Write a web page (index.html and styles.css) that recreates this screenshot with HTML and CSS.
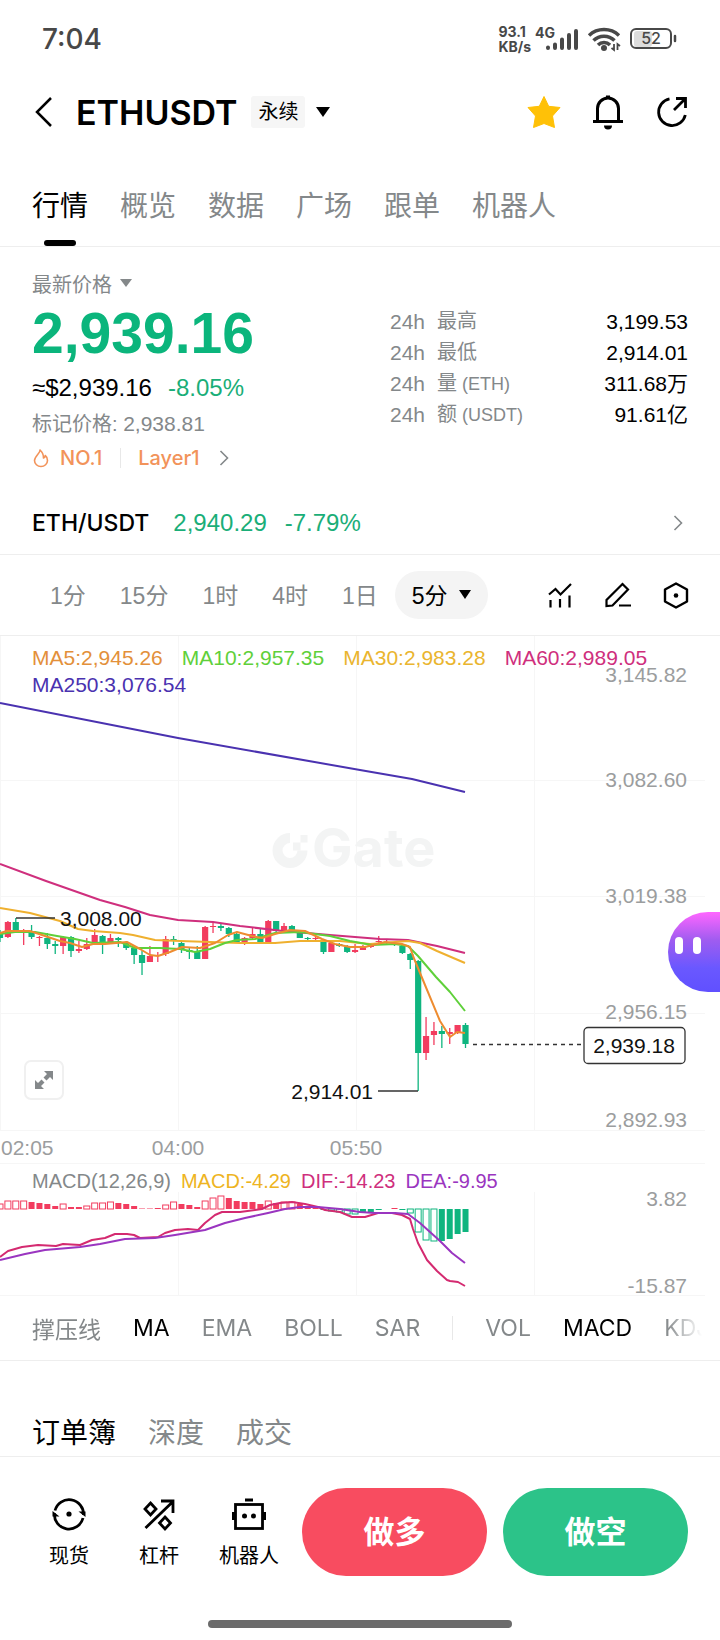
FILE: index.html
```html
<!DOCTYPE html>
<html lang="zh-CN">
<head>
    <meta charset="UTF-8">
    <meta name="viewport" content="width=device-width, initial-scale=1.0">
    <title>ETHUSDT 永续</title>
    <link rel="stylesheet" href="styles.css">
</head>
<body>
    <div class="status-bar">
        <span class="clock">7:04</span>
        <div class="status-icons">
            <span class="net-speed">93.1<br>KB/s</span>
            <svg width="44" height="28" viewBox="0 0 44 28">
                <text class="net-type" x="0" y="13">4G</text>
                <g stroke="#484848" stroke-width="4" stroke-linecap="round">
                    <path d="M13 22.5v.5M20 19.5V23M27 14.500V23M34 10V23M41 6V23"/>
                </g>
            </svg>
            <svg width="34" height="28" viewBox="0 0 34 28">
                <g fill="none" stroke="#484848" stroke-width="3.500">
                    <path d="M2 10.500a22 22 0 0 1 30 0M6.500 15.500a15 15 0 0 1 21 0M11 20a8.500 8.500 0 0 1 12 0"/>
                </g>
                <circle cx="17" cy="23" r="3" fill="#484848"/>
                <path d="M24 17h10v10H24z" fill="#fff"/>
                <path d="M27 19v6l-2.500-2M30.500 25v-6l2.500 2" fill="none" stroke="#484848" stroke-width="1.800"/>
            </svg>
            <svg width="48" height="28" viewBox="0 0 48 28">
                <rect x="5" y="6" width="18" height="16" rx="3" fill="#dcdcdc"/>
                <rect x="2" y="4" width="40" height="19" rx="5" fill="none" stroke="#484848" stroke-width="2"/>
                <path d="M46 11v5" stroke="#484848" stroke-width="2.500" stroke-linecap="round"/>
                <text class="battery-level" x="22" y="19" text-anchor="middle">52</text>
            </svg>
        </div>
    </div>

    <header class="header">
        <button type="button" class="icon-btn back" aria-label="返回">
            <svg width="20" height="32" viewBox="0 0 20 32"><path d="M17 2 3 16l14 14" fill="none" stroke="#000" stroke-width="2.500"/></svg>
        </button>
        <h1>ETHUSDT</h1>
        <button type="button" class="contract">
            <span class="tag">永续</span>
            <svg width="14" height="10" viewBox="0 0 14 10"><path d="M0 0h14L7 10z"/></svg>
        </button>
        <div class="header-actions">
            <button type="button" class="icon-btn" aria-label="收藏">
                <svg width="36" height="36" viewBox="0 0 36 36"><path d="M18 2.500l4.700 9.800 11.300 1.200-7.500 8.500 2 11.500-10.500-4-10.500 4 2-11.500L2 13.500l11.300-1.200z" fill="#ffc107" stroke="#ffc107" stroke-linejoin="round"/></svg>
            </button>
            <button type="button" class="icon-btn" aria-label="提醒">
                <svg width="36" height="36" viewBox="0 0 36 36">
                    <path d="M7.500 27V14.500a10.500 10.500 0 0 1 21 0V27M3 27.500h30" fill="none" stroke="#000" stroke-width="3"/>
                    <path d="M16 1.500h4V5h-4zM14 31.500h8a4 4 0 0 1-8 0z"/>
                </svg>
            </button>
            <button type="button" class="icon-btn" aria-label="分享">
                <svg width="36" height="36" viewBox="0 0 36 36">
                    <path d="M15.500 4.800A13.500 13.500 0 1 0 31.300 21" fill="none" stroke="#000" stroke-width="2.800"/>
                    <path d="M20 16 31 5M22 4.500h9.500V14" fill="none" stroke="#000" stroke-width="2.800"/>
                </svg>
            </button>
        </div>
    </header>

    <nav class="tabs main-tabs">
        <button type="button" class="active">行情</button>
        <button type="button">概览</button>
        <button type="button">数据</button>
        <button type="button">广场</button>
        <button type="button">跟单</button>
        <button type="button">机器人</button>
    </nav>

    <section class="summary">
        <div class="price-col">
            <button type="button" class="price-type">最新价格
                <svg width="12" height="8" viewBox="0 0 12 8"><path d="M0 0h12L6 8z" fill="#84888a"/></svg>
            </button>
            <div class="last-price">2,939.16</div>
            <div class="fiat"><span>≈$2,939.16</span><span class="up">-8.05%</span></div>
            <div class="mark">标记价格: <span class="num">2,938.81</span></div>
            <a class="rank" href="#">
                <svg width="18" height="20" viewBox="0 0 16 20"><path d="M7 2c.5 3-5.500 6-5.500 10.500a6.500 6 0 0 0 13 0c0-2-1-4-2.300-5-.2 1.500-.8 2.300-1.700 2.500C10.500 7 9.500 4 7 2z" fill="none" stroke="#f2935a" stroke-width="1.600" stroke-linejoin="round"/></svg>
                <span>NO.1</span>
                <i class="sep"></i>
                <span>Layer1</span>
                <svg class="chevron" width="10" height="16" viewBox="0 0 10 16"><path d="M1.500 1l7 7-7 7" fill="none" stroke="#84888a" stroke-width="1.600"/></svg>
            </a>
        </div>
        <dl class="stats">
            <div><dt><span class="num">24h</span><span>最高</span></dt><dd>3,199.53</dd></div>
            <div><dt><span class="num">24h</span><span>最低</span></dt><dd>2,914.01</dd></div>
            <div><dt><span class="num">24h</span><span>量<small>(ETH)</small></span></dt><dd>311.68万</dd></div>
            <div><dt><span class="num">24h</span><span>额<small>(USDT)</small></span></dt><dd>91.61亿</dd></div>
        </dl>
    </section>

    <a class="spot-pair" href="#">
        <span class="pair">ETH/USDT</span>
        <span>2,940.29</span>
        <span class="change">-7.79%</span>
        <svg class="chevron" width="10" height="16" viewBox="0 0 10 16"><path d="M1.500 1l7 7-7 7" fill="none" stroke="#84888a" stroke-width="1.600"/></svg>
    </a>

    <div class="intervals">
        <button type="button">1分</button>
        <button type="button">15分</button>
        <button type="button">1时</button>
        <button type="button">4时</button>
        <button type="button">1日</button>
        <button type="button" class="current">5分 <svg width="12" height="9" viewBox="0 0 12 9"><path d="M0 0h12L6 9z"/></svg></button>
        <div class="chart-tools">
            <button type="button" class="icon-btn" aria-label="指标">
                <svg width="28" height="28" viewBox="0 0 28 28" fill="none" stroke="#000" stroke-width="2.200">
                    <path d="M3 13.500 9.500 8l5 5.500L25 3M4.500 19v7.500M14 18v8.500M23.500 14.500v12"/>
                </svg>
            </button>
            <button type="button" class="icon-btn" aria-label="画线">
                <svg width="28" height="28" viewBox="0 0 28 28" fill="none" stroke="#000" stroke-width="2.200">
                    <path d="M2.500 25v-6L18.500 3l5.500 5.500L8.500 24.500zM15 24.500h12"/>
                </svg>
            </button>
            <button type="button" class="icon-btn" aria-label="设置">
                <svg width="28" height="28" viewBox="0 0 28 28">
                    <path d="M14 2.500l11 6v12l-11 6-11-6v-12z" fill="none" stroke="#000" stroke-width="2.400" stroke-linejoin="round"/>
                    <circle cx="14" cy="14.500" r="2.300"/>
                </svg>
            </button>
        </div>
    </div>

    <section class="chart">
        <div class="legend ma-legend">
            <span class="ma5">MA5:2,945.26</span>
            <span class="ma10">MA10:2,957.35</span>
            <span class="ma30">MA30:2,983.28</span>
            <span class="ma60">MA60:2,989.05</span>
            <span class="ma250">MA250:3,076.54</span>
        </div>
        <svg class="plot" viewBox="0 0 720 528">
            <g class="grid">
                <path d="M0 144.500h705M0 260.500h705M0 377.500h705M0 494.500h705M0 527.500h705"/>
                <path d="M.5 0v494M178.500 0v494M356.500 0v494M534.500 0v494"/>
            </g>
            <g class="watermark">
                <path d="M290 197a17.500 17.500 0 1 0 17.500 17.500h-10a7.500 7.500 0 1 1-7.500-7.500z"/>
                <path d="M293 206.500h7.500v8H293zM300.500 199h7v7.500h-7z"/>
                <text x="312" y="231">Gate</text>
            </g>
            <g id="candles"></g>
            <g id="maLines" class="lines"></g>
            <path d="M16 282h39M378 455h40" stroke="#333" stroke-width="1.500"/>
            <text class="mark-text" x="60" y="290">3,008.00</text>
            <text class="mark-text" x="373" y="463" text-anchor="end">2,914.01</text>
            <g class="axis" text-anchor="end">
                <text x="687" y="46">3,145.82</text>
                <text x="687" y="151">3,082.60</text>
                <text x="687" y="267">3,019.38</text>
                <text x="687" y="383">2,956.15</text>
                <text x="687" y="491">2,892.93</text>
            </g>
            <g class="axis">
                <text x="1" y="519">02:05</text>
                <text x="178" y="519" text-anchor="middle">04:00</text>
                <text x="356" y="519" text-anchor="middle">05:50</text>
            </g>
            <path d="M473 408.500h110" stroke="#333" stroke-width="1.500" stroke-dasharray="4 4"/>
            <rect x="584" y="391.500" width="101" height="36" rx="4" fill="#fff" stroke="#333" stroke-width="1.300"/>
            <text class="mark-text" x="634" y="417" text-anchor="middle">2,939.18</text>
        </svg>
        <button type="button" class="expand" aria-label="全屏">
            <svg width="20" height="20" viewBox="0 0 20 20" fill="#84888a">
                <path d="M10 1h9v9l-3-3-3.500 3.500-3-3L13 4zM10 19H1v-9l3 3 3.500-3.500 3 3L7 16z"/>
            </svg>
        </button>
        <button type="button" class="assistant" aria-label="助手"><i></i><i></i></button>
    </section>

    <section class="chart">
        <div class="legend macd-legend">
            <span>MACD(12,26,9)</span>
            <span class="macd">MACD:-4.29</span>
            <span class="dif">DIF:-14.23</span>
            <span class="dea">DEA:-9.95</span>
        </div>
        <svg class="plot" viewBox="0 0 720 132">
            <g class="grid">
                <path d="M0 131.500h705"/>
                <path d="M178.500 28v103M356.500 28v103M534.500 28v103"/>
            </g>
            <g id="macdBars"></g>
            <g id="macdLines" class="lines"></g>
            <g class="axis" text-anchor="end">
                <text x="687" y="42">3.82</text>
                <text x="687" y="129">-15.87</text>
            </g>
        </svg>
    </section>

    <div class="indicators">
        <button type="button">撑压线</button>
        <button type="button" class="active">MA</button>
        <button type="button">EMA</button>
        <button type="button">BOLL</button>
        <button type="button">SAR</button>
        <i class="sep"></i>
        <button type="button">VOL</button>
        <button type="button" class="active">MACD</button>
        <button type="button">KDJ</button>
    </div>

    <nav class="tabs book-tabs">
        <button type="button" class="active">订单簿</button>
        <button type="button">深度</button>
        <button type="button">成交</button>
    </nav>

    <footer class="bottom">
        <div class="bottom-row">
            <a class="shortcut" href="#">
                <svg width="36" height="36" viewBox="0 0 36 36">
                    <path d="M4 14.500A14.500 14.500 0 0 1 32.500 19M32 22A14.500 14.500 0 0 1 3.500 17" fill="none" stroke="#000" stroke-width="2.800"/>
                    <path d="M27.500 15.500h7V21zM8.500 20.500h-7V15z"/>
                    <circle cx="18" cy="18" r="2.600"/>
                </svg>
                <span>现货</span>
            </a>
            <a class="shortcut" href="#">
                <svg width="36" height="36" viewBox="0 0 36 36" fill="none" stroke="#000" stroke-width="2.800">
                    <path d="M4.500 32 32 5.500M20 5h12v12M9.500 7l5.500 6-5.500 6L4 13zM24 21l5.500 6-5.500 6-5.500-6z"/>
                </svg>
                <span>杠杆</span>
            </a>
            <a class="shortcut" href="#">
                <svg width="36" height="36" viewBox="0 0 36 36">
                    <rect x="4.500" y="8.500" width="27" height="24" fill="none" stroke="#000" stroke-width="2.800"/>
                    <path d="M14 2.500h8v3h-8zM1 16h3v8H1zM32 16h3v8h-3z"/>
                    <circle cx="13.500" cy="20" r="2.500"/><circle cx="22.500" cy="20" r="2.500"/>
                </svg>
                <span>机器人</span>
            </a>
            <div class="trade">
                <button type="button" class="long">做多</button>
                <button type="button" class="short">做空</button>
            </div>
        </div>
        <div class="home-bar"></div>
    </footer>

    <script src="script.js"></script>
</body>
</html>
```

FILE: styles.css
```css
body {
    margin: 0;
    background-color: #fff;
    color: #000;
    font-family: "Liberation Sans", "Noto Sans CJK SC", sans-serif;
    font-size: 20px;
    overflow-x: hidden;
}

button {
    margin: 0;
    padding: 0;
    border: none;
    background: none;
    color: inherit;
    font: inherit;
    white-space: nowrap;
    cursor: pointer;
}

a {
    color: inherit;
    text-decoration: none;
}

svg {
    display: block;
    flex-shrink: 0;
}

.icon-btn {
    display: flex;
}

/* status bar */
.status-bar {
    display: flex;
    align-items: center;
    justify-content: space-between;
    height: 78px;
    padding: 0 43px 0 42px;
    color: #484848;
    font-family: Inter, sans-serif;
}

.clock {
    font-size: 28px;
    font-weight: 500;
}

.status-icons {
    display: flex;
    align-items: center;
    gap: 8px;
}

.net-speed {
    font-size: 14px;
    font-weight: 700;
    line-height: 15px;
    margin-right: -4px;
}

.net-type {
    font-size: 14px;
    font-weight: 700;
    fill: #484848;
}

.battery-level {
    font-size: 16px;
    font-weight: 500;
    fill: #484848;
}

/* header */
.header {
    display: flex;
    align-items: center;
    height: 68px;
    padding: 0 30px 0 34px;
}

.header h1 {
    margin: 0 14px 0 22px;
    font-family: Inter, sans-serif;
    font-size: 34px;
    font-weight: 600;
}

.contract {
    display: flex;
    align-items: center;
    gap: 11px;
}

.tag {
    padding: 0 7px;
    background-color: #f6f6f6;
    border-radius: 3px;
    line-height: 32px;
}

.header-actions {
    display: flex;
    gap: 28px;
    margin-left: auto;
}

/* tabs */
.tabs {
    display: flex;
    gap: 32px;
    padding: 20px 32px 0;
    border-bottom: 1px solid #eee;
    font-size: 28px;
    color: #84888a;
}

.tabs button {
    position: relative;
    height: 80px;
    padding-bottom: 4px;
}

.tabs .active {
    color: #000;
}

.main-tabs .active::after {
    content: "";
    position: absolute;
    left: 50%;
    bottom: 0;
    width: 32px;
    height: 6px;
    margin-left: -16px;
    border-radius: 3px;
    background-color: #000;
}

/* price summary */
.summary {
    display: grid;
    grid-template-columns: 358fr 298fr;
    padding: 22px 32px 18px;
    color: #84888a;
}

.price-type {
    display: flex;
    align-items: center;
    gap: 8px;
    height: 28px;
}

.last-price {
    color: #0bb57c;
    font-size: 57px;
    font-weight: bold;
    line-height: 73px;
}

.fiat {
    display: flex;
    gap: 16px;
    color: #000;
    font-size: 24px;
    line-height: 36px;
}

.fiat .up {
    color: #1aae78;
}

.mark {
    line-height: 36px;
}

.num {
    font-size: 21px;
}

.rank {
    display: flex;
    align-items: center;
    height: 32px;
    color: #f2935a;
    font-family: Inter, sans-serif;
    font-weight: 500;
}

.rank span {
    margin-left: 10px;
}

.rank .sep {
    height: 20px;
    margin: 0 7px 0 18px;
}

.rank .chevron {
    margin-left: 20px;
}

.sep {
    width: 1px;
    background-color: #e8e8e8;
}

.stats {
    margin: 37px 0 0;
}

.stats div {
    display: flex;
    justify-content: space-between;
    height: 31px;
    line-height: 31px;
}

.stats dt {
    display: flex;
    gap: 12px;
}

.stats small {
    margin-left: 5px;
    font-size: 18px;
}

.stats dd {
    margin: 0;
    color: #000;
    font-size: 21px;
}

.spot-pair {
    display: flex;
    align-items: center;
    height: 62px;
    padding: 0 37px 0 32px;
    border-bottom: 1px solid #eee;
    color: #1aae78;
    font-size: 24px;
}

.spot-pair .pair {
    margin-right: 24px;
    color: #000;
    font-family: Inter, sans-serif;
    font-size: 23px;
    font-weight: 500;
}

.spot-pair .change {
    margin-left: 18px;
}

.spot-pair .chevron {
    margin-left: auto;
}

/* interval bar */
.intervals {
    display: flex;
    align-items: center;
    height: 80px;
    padding: 0 30px 0 33px;
    border-bottom: 1px solid #eee;
    color: #84888a;
    font-size: 23px;
}

.intervals > button {
    padding: 0 17px 2px;
}

.intervals .current {
    display: flex;
    align-items: center;
    gap: 11px;
    height: 48px;
    border-radius: 24px;
    background-color: #f4f4f4;
    color: #000;
}

.chart-tools {
    display: flex;
    gap: 30px;
    margin-left: auto;
}

/* charts */
.chart {
    position: relative;
}

.plot {
    width: 100%;
    height: auto;
}

.legend {
    position: absolute;
    top: 0;
    left: 0;
    right: 0;
    display: flex;
    flex-wrap: wrap;
    white-space: nowrap;
}

.ma-legend {
    gap: 0 19px;
    padding: 8px 32px 0;
    font-size: 21px;
    line-height: 27px;
}

.macd-legend {
    gap: 10px;
    padding: 4px 32px 0;
    color: #84888a;
    font-size: 20px;
    line-height: 27px;
}

.ma5 { color: #e3903a; }
.ma10 { color: #5fd03a; }
.ma30 { color: #eab52f; }
.ma60 { color: #cf2f7d; }
.ma250 { color: #4a32b0; }
.macd { color: #eeb422; }
.dif { color: #cf2f7d; }
.dea { color: #9a35c0; }

.grid path {
    stroke: #f6f6f6;
}

.watermark {
    fill: #f3f4f4;
}

.watermark text {
    font-family: Inter, sans-serif;
    font-size: 54px;
    font-weight: 700;
}

.axis text {
    fill: #9b9d9e;
    font-size: 21px;
}

.mark-text {
    fill: #111;
    font-size: 21px;
}

.lines polyline {
    fill: none;
    stroke-width: 2;
    stroke-linejoin: round;
}

.expand {
    position: absolute;
    left: 24px;
    bottom: 64px;
    display: flex;
    align-items: center;
    justify-content: center;
    width: 40px;
    height: 40px;
    border: 2px solid #f0f0f0;
    border-radius: 7px;
    background-color: #fff;
}

.assistant {
    position: absolute;
    right: 0;
    top: 276px;
    display: flex;
    gap: 10px;
    width: 52px;
    height: 80px;
    padding: 25px 0 0 7px;
    border-radius: 40px 0 0 40px;
    background: linear-gradient(#ff66ff, #a05cf0 35%, #6a58ff 70%, #6050ff);
}

.assistant i {
    width: 8px;
    height: 17px;
    border-radius: 4px;
    background-color: #fff;
}

/* indicator bar */
.indicators {
    display: flex;
    align-items: center;
    gap: 32px;
    height: 64px;
    padding-left: 32px;
    margin-right: 18px;
    overflow: hidden;
    color: #84888a;
    font-family: Inter, "Noto Sans CJK SC", sans-serif;
    font-size: 23px;
    -webkit-mask-image: linear-gradient(to left, transparent, #000 36px);
    mask-image: linear-gradient(to left, transparent, #000 36px);
}

.indicators .active {
    color: #000;
}

.indicators .sep {
    flex-shrink: 0;
    height: 24px;
}

.book-tabs {
    padding-top: 49px;
    border-top: 1px solid #eee;
}

.book-tabs button {
    height: 46px;
}

/* bottom bar */
.bottom {
    padding: 31px 0 12px;
}

.bottom-row {
    display: flex;
    padding: 0 32px 0 24px;
}

.shortcut {
    display: flex;
    flex-direction: column;
    align-items: center;
    gap: 12px;
    width: 90px;
    padding: 8px 0;
    line-height: 24px;
}

.trade {
    display: flex;
    flex: 1;
    gap: 16px;
    margin-left: 8px;
}

.trade button {
    flex: 1;
    height: 88px;
    padding-bottom: 6px;
    border-radius: 44px;
    color: #fff;
    font-size: 31px;
    font-weight: bold;
}

.long {
    background-color: #f84c60;
}

.short {
    background-color: #2cc389;
}

.home-bar {
    width: 304px;
    height: 8px;
    margin: 44px auto 0;
    border-radius: 4px;
    background-color: #6b6b6b;
}
```

FILE: script.js
```js
const STEP = 7.89;
const RED = '#f23c5f';
const GREEN = '#0fb57f';

// direction, high, body top, body bottom, low
const candles = [
    ['g', 294, 298, 302, 306], ['r', 285, 286, 301, 302], ['g', 282, 286, 294, 297], ['r', 293, 295, 296, 309],
    ['g', 289, 296, 301, 303], ['r', 300, 301, 302, 310], ['g', 297, 302, 308, 313], ['g', 305, 308, 310, 318],
    ['r', 300, 301, 310, 318], ['g', 300, 301, 315, 321], ['r', 305, 313, 315, 317], ['r', 302, 308, 313, 314],
    ['r', 293, 299, 307, 308], ['g', 299, 300, 308, 318], ['r', 298, 302, 306, 307], ['g', 301, 302, 304, 311],
    ['g', 305, 307, 312, 314], ['g', 309, 312, 319, 328], ['g', 315, 319, 327, 339], ['r', 310, 320, 326, 326],
    ['r', 316, 319, 320, 326], ['r', 300, 303, 318, 320], ['g', 300, 303, 305, 309], ['g', 305, 307, 314, 317],
    ['g', 312, 314, 316, 323], ['g', 310, 315, 323, 323], ['r', 290, 291, 323, 323], ['r', 287, 290, 291, 297],
    ['g', 288, 290, 292, 295], ['g', 291, 292, 298, 301], ['g', 296, 298, 306, 306], ['r', 301, 302, 306, 309],
    ['r', 292, 298, 302, 303], ['g', 292, 298, 306, 307], ['r', 284, 285, 306, 306], ['g', 285, 285, 295, 297],
    ['r', 287, 290, 295, 296], ['g', 289, 290, 294, 295], ['g', 294, 296, 302, 302], ['g', 301, 302, 303, 304],
    ['r', 300, 302, 303, 304], ['g', 304, 306, 316, 318], ['r', 307, 307, 316, 316], ['g', 307, 308, 310, 311],
    ['g', 309, 311, 316, 317], ['r', 308, 314, 316, 317], ['r', 309, 310, 314, 314], ['r', 307, 309, 311, 312],
    ['r', 300, 305, 306, 308], ['r', 303, 306, 307, 309], ['g', 306, 307, 309, 310], ['g', 308, 310, 317, 318],
    ['g', 317, 318, 324, 333], ['g', 324, 325, 417, 455], ['r', 381, 400, 417, 424], ['r', 386, 395, 399, 409],
    ['g', 390, 395, 398, 412], ['r', 392, 396, 398, 408], ['r', 389, 389, 397, 398], ['g', 387, 389, 408, 412]
];

const maLines = {
    '#4a32b0': '0,67 178,102 360,134 412,143 465,156',
    '#cf2f7d': '0,228 46,245 100,264 125,271 150,279 178,284 213,286 240,290 283,295 330,299 380,303 408,304 437,310 465,317',
    '#efb02f': '0,272 30,277 60,285 78,293 93,295 120,297 133,299 155,304 180,305 210,306 240,307 275,307 300,305 340,305 370,308 395,306 408,305 420,307 437,315 465,327',
    '#5fd03a': '0,298 15,296 35,296 57,300 75,303 93,307 120,306 135,312 160,312 180,313 195,316 210,313 225,307 237,304 255,303 265,300 275,297 300,296 330,300 350,305 372,309 395,308 408,310 418,320 436,341 450,356 465,375',
    '#ee8c30': '0,297 7,295 30,295 45,300 60,305 70,307 82,311 93,308 105,308 127,306 140,313 150,319 158,320 170,316 182,311 200,312 215,307 228,299 237,296 252,300 262,302 275,298 290,294 305,295 322,303 335,308 350,311 365,311 385,306 402,308 410,311 413,320 425,349 440,385 450,401 457,396 465,397'
};

// height above the zero line, 1 = filled
const bars = [
    [5, 0], [8, 0], [8, 0], [8, 0], [7, 1], [6, 1], [5, 1], [3, 1], [5, 0], [2, 1], [2, 1], [3, 0],
    [6, 0], [6, 0], [7, 0], [6, 1], [5, 1], [3, 1], [0.5, 1], [0.5, 1], [1, 1], [4, 0], [7, 0], [5, 1],
    [4, 1], [2, 1], [8, 0], [11, 0], [13, 0], [11, 1], [8, 1], [7, 1], [7, 1], [5, 1], [8, 0], [6, 1],
    [7, 0], [7, 0], [5, 1], [3, 1], [1, 1], [-1, 1], [-2, 0], [-3, 0], [-5, 0], [-5, 0], [-4, 1], [-3, 1],
    [-1, 1], [0, 1], [1, 1], [-1, 1], [-4, 0], [-23, 0], [-31, 0], [-32, 0], [-32, 1], [-30, 1], [-25, 1], [-23, 1]
];

const macdLines = {
    '#d42a70': '0,93 8,87 22,83 38,81 56,82 63,80 80,81 92,76 105,74 115,70 127,70 134,71 140,74 158,73 165,69 175,66 188,65 198,66 205,59 215,51 222,48 240,48 255,46 262,45 270,41 280,39 292,38 305,40 318,43 325,46 340,48 352,53 365,53 378,49 392,49 402,51 410,55 413,65 418,79 427,96 437,107 447,116 450,117 458,118 465,122',
    '#9a35c0': '0,96 25,90 45,86 80,83 100,80 125,75 155,74 175,71 205,66 225,59 245,54 268,49 285,45 300,43 318,43 340,45 360,48 375,49 395,49 408,50 420,59 440,77 452,89 465,99'
};

function add(parent, name, attrs) {
    const el = document.createElementNS('http://www.w3.org/2000/svg', name);
    for (const key in attrs) {
        el.setAttribute(key, attrs[key]);
    }
    parent.appendChild(el);
}

function drawLines(id, lines) {
    const group = document.getElementById(id);
    for (const color in lines) {
        add(group, 'polyline', { points: lines[color], stroke: color });
    }
}

const candleGroup = document.getElementById('candles');
candles.forEach(([dir, high, top, bottom, low], i) => {
    const x = i * STEP;
    const color = dir === 'r' ? RED : GREEN;
    add(candleGroup, 'path', { d: `M${x} ${high}V${low}`, stroke: color, 'stroke-width': 1.3 });
    add(candleGroup, 'rect', { x: x - 3.1, y: top, width: 6.2, height: bottom - top, fill: color });
});

const barGroup = document.getElementById('macdBars');
bars.forEach(([h, filled], i) => {
    const color = h > 0 ? RED : GREEN;
    add(barGroup, 'rect', {
        x: i * STEP - 3,
        y: h > 0 ? 45 - h : 45,
        width: 6,
        height: Math.abs(h),
        fill: filled ? color : '#fff',
        stroke: filled ? 'none' : color
    });
});

drawLines('maLines', maLines);
drawLines('macdLines', macdLines);
```
